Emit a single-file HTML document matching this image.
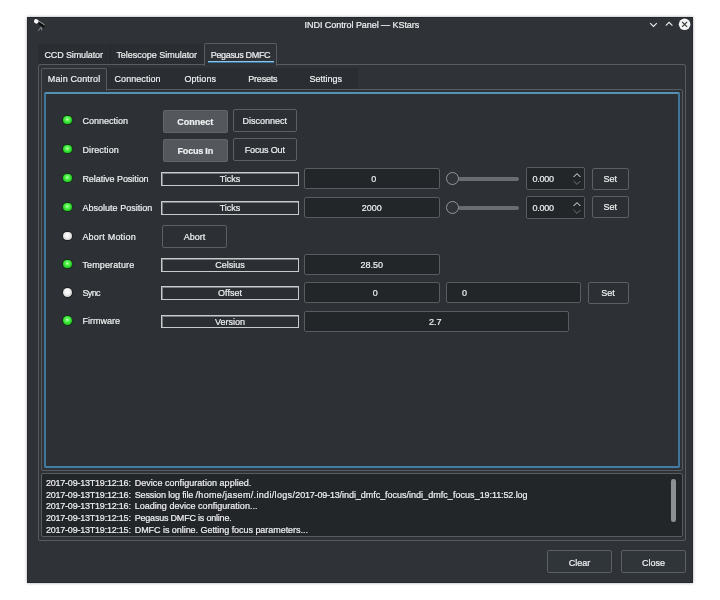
<!DOCTYPE html>
<html>
<head>
<meta charset="utf-8">
<title>INDI Control Panel</title>
<style>
*{box-sizing:border-box;margin:0;padding:0}
html,body{width:720px;height:600px;background:#fff;overflow:hidden}
body{font-family:"Liberation Sans",sans-serif;font-size:9px;color:#eff0f1;position:relative;-webkit-text-stroke:0.2px #eff0f1}
#layer{position:absolute;left:0;top:0;width:720px;height:600px;will-change:transform}
.abs{position:absolute}
#win{position:absolute;left:27px;top:17px;width:666px;height:566px;background:#2f3338;box-shadow:0 0 3px rgba(0,0,0,.35),inset 0 0 0 1px #25282c}
.t{position:absolute;white-space:nowrap;line-height:11px;height:11px}
.btn{position:absolute;border:1px solid #5c6064;border-radius:2px;background:#2c3034;text-align:center;white-space:nowrap}
.btn.on{background:#54585d;border-color:#62666a;font-weight:bold}
.btn.win{background:#30353a}
.lbl{position:absolute;border:1px solid #c8cacb;background:#2b2f33;text-align:center;height:13.5px;line-height:13.3px;box-shadow:inset 1px 1px 0 #7a7d80}
.val{position:absolute;border:1px solid #585c60;border-radius:2px;background:#232629;text-align:center;height:21px;line-height:20.8px}
.led{position:absolute;width:8.8px;height:8.8px;border-radius:50%}
.led.g{background:radial-gradient(circle at 48% 42%,#d0ffcc 0%,#6cfa66 20%,#33e02f 52%,#1cae1a 82%,#0f7411 100%);box-shadow:0 0 0 0.9px rgba(8,56,14,.75)}
.led.w{background:radial-gradient(circle at 48% 42%,#ffffff 0%,#f2f2f2 35%,#d2d2d2 70%,#9c9c9c 100%);box-shadow:0 0 0 0.9px rgba(20,20,20,.7)}
.log{position:absolute;left:45.9px;white-space:nowrap;line-height:11px;height:11px}

</style>
</head>
<body>
<div id="layer">
<div id="win"></div>

<svg class="abs" style="left:645px;top:17px" width="48" height="16" viewBox="0 0 48 16">
  <path d="M5.2 6.2 L8.5 9.5 L11.8 6.2" fill="none" stroke="#eff0f1" stroke-width="1.1"/>
  <path d="M20.8 8.6 L24.1 5.3 L27.4 8.6" fill="none" stroke="#eff0f1" stroke-width="1.1"/>
  <circle cx="39.6" cy="7.3" r="5.8" fill="#f4f5f5"/>
  <path d="M37.1 4.8 L42.1 9.8 M42.1 4.8 L37.1 9.8" fill="none" stroke="#2c3034" stroke-width="1.1"/>
</svg>
<svg class="abs" style="left:32.4px;top:18px" width="15.4" height="15.4" viewBox="0 0 14 14">
  <path d="M5.6 4.1 L10.6 7.3" stroke="#111" stroke-width="2.7" stroke-linecap="round" fill="none"/>
  <path d="M6.3 2.9 L11.4 6.3" stroke="#e8e8e8" stroke-width="0.7" stroke-linecap="round" fill="none" opacity=".85"/>
  <ellipse cx="3.9" cy="3.1" rx="2.2" ry="1.9" fill="#f6f6f6" transform="rotate(30 3.9 3.1)"/>
  <path d="M8.2 8.4 L5.8 11.6 M8.2 8.4 L9 11.2" stroke="#a0a3a6" stroke-width="0.8" fill="none"/>
</svg>

<!-- outer tab bar -->
<div class="abs" style="left:38px;top:44px;width:239px;height:21px;background:#2a2d31"></div>
<div class="abs" style="left:109.6px;top:45px;width:1px;height:19px;background:#25282b"></div>
<div class="abs" style="left:38px;top:64px;width:648px;height:477px;border:1px solid #585c60;border-radius:2px"></div>
<div class="abs" style="left:204px;top:43px;width:73px;height:23px;background:#2f3338;border:1px solid #585c60;border-bottom:none;border-radius:2px 2px 0 0"></div>
<div class="abs" style="left:208px;top:61px;width:66px;height:1px;background:#8fc4e2"></div>
<div class="abs" style="left:208px;top:62px;width:66px;height:1px;background:#33749c"></div>

<!-- inner tab bar -->
<div class="abs" style="left:41px;top:68px;width:317px;height:22px;background:#2a2d31"></div>
<div class="abs" style="left:41px;top:89px;width:642px;height:382px;border:1px solid #585c60;border-radius:2px"></div>
<div class="abs" style="left:41px;top:68px;width:66px;height:23px;background:#2f3338;border:1px solid #585c60;border-bottom:none;border-radius:2px 2px 0 0"></div>

<!-- blue focus frame -->
<div class="abs" style="left:44px;top:92px;width:636px;height:376px;border:2px solid #41769b;border-top-color:#5690b3;border-bottom-color:#447da4;border-radius:2px;background:#2d3135"></div>


<!-- row 1 -->
<div class="led g" style="left:63.05px;top:115.60px"></div>
<div class="btn on" style="left:163px;top:110px;width:64.5px;height:23px;line-height:22.6px">Connect</div>
<div class="btn" style="left:232.5px;top:108.8px;width:64.5px;height:23px;line-height:22.6px">Disconnect</div>
<!-- row 2 -->
<div class="led g" style="left:63.05px;top:144.55px"></div>
<div class="btn on" style="left:163px;top:139px;width:64.5px;height:23px;line-height:22.6px;letter-spacing:-0.2px">Focus In</div>
<div class="btn" style="left:232.5px;top:137.9px;width:64.5px;height:23px;line-height:22.6px;letter-spacing:-0.17px">Focus Out</div>
<!-- row 3 -->
<div class="led g" style="left:63.05px;top:173.60px"></div>
<div class="lbl" style="left:160.8px;top:172px;width:138.4px">Ticks</div>
<div class="val" style="left:304px;top:168px;width:135.5px;padding-left:4px">0</div>
<div class="abs" style="left:458px;top:176.6px;width:60.5px;height:4px;border-radius:2px;background:#696d71"></div>
<div class="abs" style="left:446px;top:172.1px;width:13px;height:13px;border-radius:50%;border:1px solid #94979a;background:#303438"></div>
<div class="val" style="left:526px;top:167px;width:59px;height:22.5px;text-align:left;padding-left:5.6px;line-height:22px;letter-spacing:-0.28px">0.000</div>
<svg class="abs" style="left:570.6px;top:168.8px" width="12" height="21" viewBox="0 0 12 21">
  <path d="M2.6 8 L6 4.6 L9.4 8" fill="none" stroke="#eff0f1" stroke-width="1"/>
  <path d="M2.6 12 L6 15.4 L9.4 12" fill="none" stroke="#6d7175" stroke-width="1"/>
</svg>
<div class="btn" style="left:591.5px;top:167.5px;width:37.5px;height:22px;line-height:21.6px">Set</div>
<!-- row 4 -->
<div class="led g" style="left:63.05px;top:202.60px"></div>
<div class="lbl" style="left:160.8px;top:201px;width:138.4px">Ticks</div>
<div class="val" style="left:304px;top:197px;width:135.5px">2000</div>
<div class="abs" style="left:458px;top:205.6px;width:60.5px;height:4px;border-radius:2px;background:#696d71"></div>
<div class="abs" style="left:446px;top:201.1px;width:13px;height:13px;border-radius:50%;border:1px solid #94979a;background:#303438"></div>
<div class="val" style="left:526px;top:196px;width:59px;height:22.5px;text-align:left;padding-left:5.6px;line-height:22px;letter-spacing:-0.28px">0.000</div>
<svg class="abs" style="left:570.6px;top:197.8px" width="12" height="21" viewBox="0 0 12 21">
  <path d="M2.6 8 L6 4.6 L9.4 8" fill="none" stroke="#eff0f1" stroke-width="1"/>
  <path d="M2.6 12 L6 15.4 L9.4 12" fill="none" stroke="#6d7175" stroke-width="1"/>
</svg>
<div class="btn" style="left:591.5px;top:196.3px;width:37.5px;height:22px;line-height:21.6px">Set</div>
<!-- row 5 -->
<div class="led w" style="left:63.05px;top:231.70px"></div>
<div class="btn" style="left:162.2px;top:224.8px;width:64.5px;height:23px;line-height:22.6px">Abort</div>
<!-- row 6 -->
<div class="led g" style="left:63.05px;top:259.70px"></div>
<div class="lbl" style="left:160.8px;top:258.2px;width:138.4px">Celsius</div>
<div class="val" style="left:304px;top:254.2px;width:135.5px">28.50</div>
<!-- row 7 -->
<div class="led w" style="left:63.05px;top:287.90px"></div>
<div class="lbl" style="left:160.8px;top:286.4px;width:138.4px">Offset</div>
<div class="val" style="left:304px;top:282.3px;width:135.5px;padding-left:7px">0</div>
<div class="val" style="left:446px;top:282.3px;width:135.2px;text-align:left;padding-left:15px">0</div>
<div class="btn" style="left:587.5px;top:281.8px;width:41.5px;height:22.7px;line-height:21.4px;padding-right:0.5px">Set</div>
<!-- row 8 -->
<div class="led g" style="left:63.05px;top:316.00px"></div>
<div class="lbl" style="left:160.8px;top:314.6px;width:138.4px">Version</div>
<div class="val" style="left:304px;top:310.8px;width:264.5px;padding-right:2px">2.7</div>

<!-- log -->
<div class="abs" style="left:41px;top:473px;width:642px;height:64px;border:1px solid #585c60;border-radius:2px;background:#232629"></div>
<div class="abs" style="left:671.4px;top:479px;width:4.6px;height:43px;border-radius:2.3px;background:#8e9193"></div>

<div class="btn win" style="left:547px;top:550px;width:64.8px;height:22.6px;line-height:24px">Clear</div>
<div class="btn win" style="left:621.2px;top:550px;width:64.5px;height:22.6px;line-height:24px">Close</div>
<div class="t" id="t0" style="left:304.60px;top:20.30px;letter-spacing:-0.054px;">INDI Control Panel — KStars</div>
<div class="t" id="t1" style="left:44.50px;top:50.10px;letter-spacing:-0.132px;">CCD Simulator</div>
<div class="t" id="t2" style="left:116.40px;top:50.10px;letter-spacing:-0.018px;">Telescope Simulator</div>
<div class="t" id="t3" style="left:210.80px;top:50.10px;letter-spacing:-0.344px;">Pegasus DMFC</div>
<div class="t" id="t4" style="left:47.80px;top:74.20px;letter-spacing:0.122px;">Main Control</div>
<div class="t" id="t5" style="left:114.50px;top:74.20px;letter-spacing:0.065px;">Connection</div>
<div class="t" id="t6" style="left:184.40px;top:74.20px;letter-spacing:0.096px;">Options</div>
<div class="t" id="t7" style="left:248.30px;top:74.20px;letter-spacing:-0.217px;">Presets</div>
<div class="t" id="t8" style="left:309.40px;top:74.20px;letter-spacing:0.021px;">Settings</div>
<div class="t" id="t9" style="left:82.40px;top:115.70px;letter-spacing:0.005px;">Connection</div>
<div class="t" id="t10" style="left:82.40px;top:144.70px;letter-spacing:0.120px;">Direction</div>
<div class="t" id="t11" style="left:82.40px;top:173.70px;letter-spacing:-0.050px;">Relative Position</div>
<div class="t" id="t12" style="left:82.40px;top:202.70px;letter-spacing:0.027px;">Absolute Position</div>
<div class="t" id="t13" style="left:82.40px;top:231.70px;letter-spacing:0.214px;">Abort Motion</div>
<div class="t" id="t14" style="left:82.40px;top:259.90px;letter-spacing:0.134px;">Temperature</div>
<div class="t" id="t15" style="left:82.40px;top:288.10px;letter-spacing:-0.604px;">Sync</div>
<div class="t" id="t16" style="left:82.40px;top:316.10px;letter-spacing:0.013px;">Firmware</div>
<div class="t" id="t17" style="left:45.90px;top:477.90px;letter-spacing:-0.214px;">2017-09-13T19:12:16:</div>
<div class="t" id="t18" style="left:134.70px;top:477.90px;letter-spacing:0.039px;">Device configuration applied.</div>
<div class="t" id="t19" style="left:45.90px;top:489.50px;letter-spacing:-0.214px;">2017-09-13T19:12:16:</div>
<div class="t" id="t20" style="left:134.70px;top:489.50px;letter-spacing:-0.128px;">Session log file</div>
<div class="t" id="t21" style="left:195.50px;top:489.50px;letter-spacing:0.337px;">/home/jasem/.indi/logs/</div>
<div class="t" id="t22" style="left:295.30px;top:489.50px;letter-spacing:-0.175px;">2017-09-13</div>
<div class="t" id="t23" style="left:339.60px;top:489.50px;letter-spacing:-0.047px;">/indi_dmfc_focus</div>
<div class="t" id="t24" style="left:406.40px;top:489.50px;letter-spacing:0.044px;">/indi_dmfc_focus_</div>
<div class="t" id="t25" style="left:479.70px;top:489.50px;letter-spacing:-0.099px;">19:11:52.log</div>
<div class="t" id="t26" style="left:45.90px;top:501.20px;letter-spacing:-0.214px;">2017-09-13T19:12:16:</div>
<div class="t" id="t27" style="left:134.70px;top:501.20px;letter-spacing:0.023px;">Loading device configuration...</div>
<div class="t" id="t28" style="left:45.90px;top:512.80px;letter-spacing:-0.214px;">2017-09-13T19:12:15:</div>
<div class="t" id="t29" style="left:134.70px;top:512.80px;letter-spacing:-0.206px;">Pegasus DMFC is online.</div>
<div class="t" id="t30" style="left:45.90px;top:524.60px;letter-spacing:-0.214px;">2017-09-13T19:12:15:</div>
<div class="t" id="t31" style="left:134.70px;top:524.60px;letter-spacing:-0.044px;">DMFC is online. Getting focus parameters...</div>

</div>
</body>
</html>
